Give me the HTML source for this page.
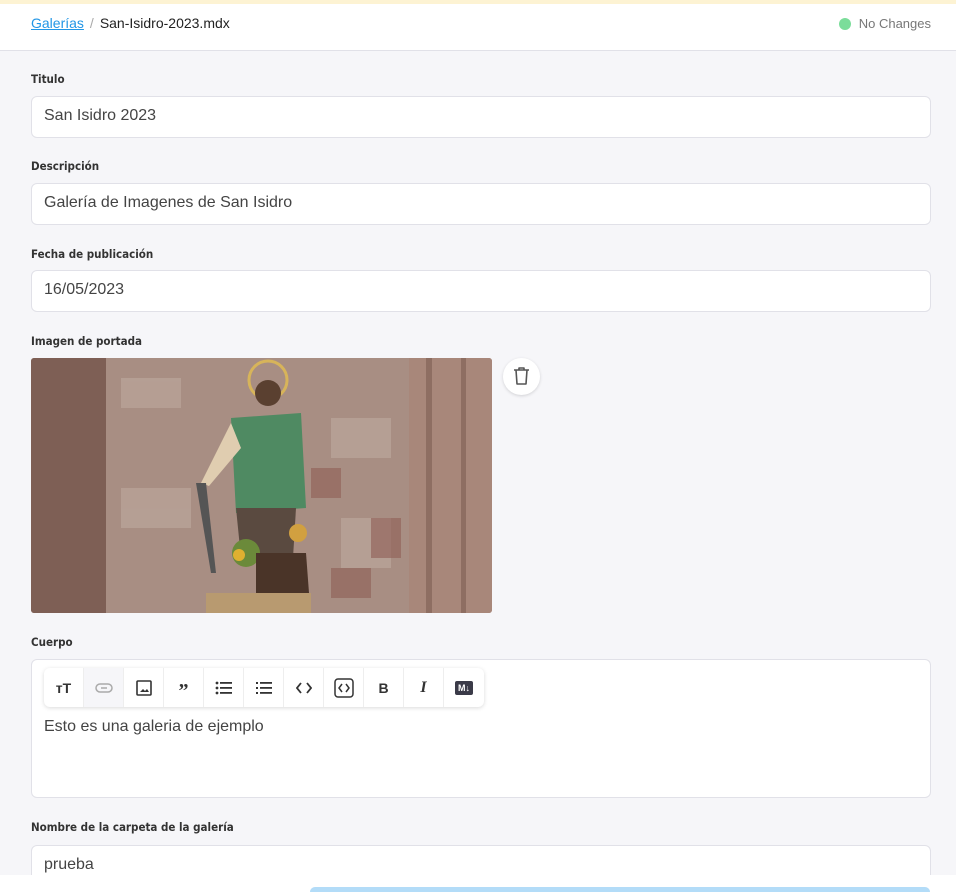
<!DOCTYPE html>
<html><head><meta charset="utf-8"><style>
*{box-sizing:border-box;margin:0;padding:0}
html,body{width:956px;height:892px;overflow:hidden}
body{background:#f6f6f9;font-family:"Liberation Sans",sans-serif;position:relative}
.top{position:absolute;left:0;top:0;width:956px;height:4px;background:#fdf3d3}
.hdr{position:absolute;left:0;top:4px;width:956px;height:47px;background:#fff;border-bottom:1px solid #e1e1e8}
.bc{position:absolute;left:31px;top:11px;font-size:14px;color:#222}
.bc a{color:#2296e6;text-decoration:underline}
.bc span{color:#aaa;margin:0 6px}
.st{position:absolute;right:25px;top:12px;font-size:13px;color:#777}
.st i{display:inline-block;width:12px;height:12px;border-radius:6px;background:#7bdd9a;vertical-align:-2px;margin-right:8px}
.lbl{position:absolute;left:31px;font-weight:bold;color:#333;font-family:"DejaVu Sans Condensed","Liberation Sans",sans-serif;font-size:11.5px}
.inp{position:absolute;left:31px;width:900px;height:42px;background:#fff;border:1px solid #e1e1e8;border-radius:6px;padding:10px 12px;font-size:16px;color:#444}
.del{position:absolute;left:503px;top:358px;width:37px;height:37px;border-radius:50%;background:#fff;box-shadow:0 1px 3px rgba(0,0,0,.15)}
.tb{position:absolute;left:44px;top:668px;height:39px;display:flex;background:#fff;border-radius:6px;box-shadow:0 1px 4px rgba(0,0,0,.15)}
.tb div{width:40px;height:39px;border-right:1px solid #eee;display:flex;align-items:center;justify-content:center;font-weight:bold;color:#333;font-size:14px}
.tb div:last-child{border-right:none}
.bot{position:absolute;left:0;top:875px;width:956px;height:17px;background:#fff}
.btn{position:absolute;left:310px;top:887px;width:620px;height:5px;border-radius:10px 10px 0 0;background:#b3dcf8}
</style></head><body>
<div class="top"></div>
<div class="hdr"><div class="bc"><a>Galerías</a><span>/</span>San-Isidro-2023.mdx</div><div class="st"><i></i>No Changes</div></div>

<div class="lbl" style="top:72px">Titulo</div>
<div class="inp" style="top:96px">San Isidro 2023</div>
<div class="lbl" style="top:159px">Descripción</div>
<div class="inp" style="top:183px">Galería de Imagenes de San Isidro</div>
<div class="lbl" style="top:247px">Fecha de publicación</div>
<div class="inp" style="top:270px">16/05/2023</div>
<div class="lbl" style="top:334px">Imagen de portada</div>

<svg style="position:absolute;left:31px;top:358px;border-radius:3px" width="461" height="255" viewBox="0 0 461 255">
<rect width="461" height="255" fill="#a88e83"/>
<rect width="75" height="255" fill="#7e5f55"/>
<rect x="378" width="83" height="255" fill="#a8877a"/>
<rect x="395" width="6" height="255" fill="#8e6e62"/>
<rect x="430" width="5" height="255" fill="#8e6e62"/>
<g fill="#bba69b" opacity=".7"><rect x="90" y="20" width="60" height="30"/><rect x="300" y="60" width="60" height="40"/><rect x="90" y="130" width="70" height="40"/><rect x="310" y="160" width="50" height="50"/></g>
<g fill="#8f5e55" opacity=".6"><rect x="280" y="110" width="30" height="30"/><rect x="340" y="160" width="30" height="40"/><rect x="300" y="210" width="40" height="30"/></g>
<circle cx="237" cy="22" r="19" fill="none" stroke="#d7b45a" stroke-width="3"/>
<circle cx="237" cy="35" r="13" fill="#5a4030"/>
<path d="M200 60 L270 55 L275 150 L205 155 Z" fill="#4f8a62"/>
<path d="M200 65 L170 125 L178 128 L210 90Z" fill="#e0cdb0"/>
<path d="M205 150 L265 150 L262 200 L210 200Z" fill="#5a4a40"/>
<path d="M165 125 L180 215 L185 215 L175 125Z" fill="#555"/>
<circle cx="215" cy="195" r="14" fill="#6b8a3a"/><circle cx="208" cy="197" r="6" fill="#e0b030"/>
<circle cx="267" cy="175" r="9" fill="#d1a040"/>
<path d="M225 195 L275 195 L278 235 L225 235Z" fill="#4a3428"/>
<rect x="175" y="235" width="105" height="20" fill="#b89a70"/>
</svg>
<div class="del"><svg width="37" height="37" viewBox="0 0 37 37"><path d="M11 12h15M16 12v-2h5v2M13 12l1 14h9l1-14" fill="none" stroke="#555" stroke-width="1.6" stroke-linejoin="round"/></svg></div>

<div class="lbl" style="top:635px">Cuerpo</div>
<div class="inp" style="top:659px;height:139px;padding:58px 12px 0">Esto es una galeria de ejemplo</div>
<div class="tb">
<div>ᴛT</div>
<div style="background:#f6f6f9"><svg width="18" height="10"><rect x="1" y="1" width="16" height="8" rx="4" fill="none" stroke="#aaa" stroke-width="1.5"/><line x1="6" y1="5" x2="12" y2="5" stroke="#aaa" stroke-width="1.5"/></svg></div>
<div><svg width="16" height="16"><rect x="1" y="1" width="14" height="14" rx="1" fill="none" stroke="#333" stroke-width="1.6"/><path d="M4 12l3-3 2 2 2-2 2 3z" fill="#333"/></svg></div>
<div style="font-size:20px;font-family:'Liberation Serif',serif;padding-top:8px">”</div>
<div><svg width="18" height="14"><g fill="#333"><circle cx="2" cy="2" r="1.4"/><circle cx="2" cy="7" r="1.4"/><circle cx="2" cy="12" r="1.4"/><rect x="5" y="1" width="12" height="1.8"/><rect x="5" y="6" width="12" height="1.8"/><rect x="5" y="11" width="12" height="1.8"/></g></svg></div>
<div><svg width="18" height="14"><g fill="#333"><rect x="1" y="1" width="2" height="2"/><rect x="1" y="6" width="2" height="2"/><rect x="1" y="11" width="2" height="2"/><rect x="5" y="1" width="12" height="1.8"/><rect x="5" y="6" width="12" height="1.8"/><rect x="5" y="11" width="12" height="1.8"/></g></svg></div>
<div><svg width="16" height="12"><path d="M5 1L1 6l4 5M11 1l4 5-4 5" fill="none" stroke="#333" stroke-width="1.8"/></svg></div>
<div><svg width="20" height="20"><rect x="1" y="1" width="18" height="18" rx="3" fill="none" stroke="#333" stroke-width="1.5"/><path d="M8 6L5 10l3 4M12 6l3 4-3 4" fill="none" stroke="#333" stroke-width="1.5"/></svg></div>
<div>B</div>
<div style="font-style:italic;font-family:'Liberation Serif',serif;font-size:16px">I</div>
<div><span style="background:#3a3a48;color:#fff;font-size:9px;padding:2px 3px;border-radius:2px">M↓</span></div>
</div>

<div class="lbl" style="top:820px">Nombre de la carpeta de la galería</div>
<div class="inp" style="top:845px">prueba</div>
<div class="bot"></div>
<div class="btn"></div>
</body></html>
